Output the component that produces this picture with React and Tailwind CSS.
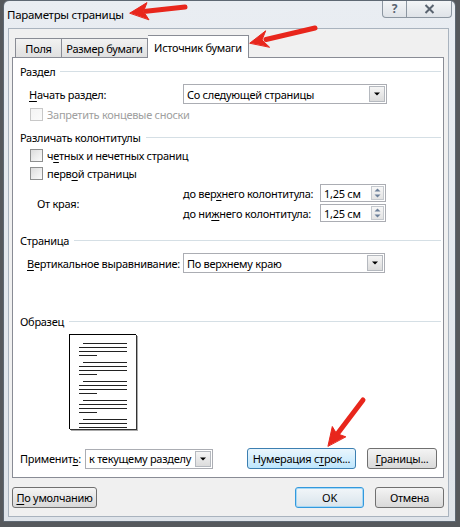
import React from "react";

const font = { fontFamily: '"Noto Sans", "Open Sans", sans-serif', letterSpacing: "-0.28px" };

function Arrow() {
  return (
    <svg width="14" height="14" viewBox="0 0 14 14">
      <path d="M4 5.5 L10 5.5 L7 8.5 Z" fill="#000" />
    </svg>
  );
}

function Select({ text, w }) {
  return (
    <div className={`flex h-[20px] items-center border border-[#abadb3] bg-white ${w}`}>
      <span className="flex-1 pl-[3px] text-[11px] leading-none text-black">{text}</span>
      <div className="mr-[1px] flex h-[16px] w-[16px] items-center justify-center border border-[#b5b9bf] bg-gradient-to-b from-[#f5f5f5] to-[#dcdcdc]">
        <Arrow />
      </div>
    </div>
  );
}

function Spin({ text }) {
  return (
    <div className="flex h-[18px] w-[66px] items-center border border-[#abadb3] bg-white">
      <span className="flex-1 pl-[3px] text-[11px] leading-none">{text}</span>
      <div className="mr-[1px] flex h-[14px] w-[13px] flex-col border border-[#c5c9ce] bg-gradient-to-b from-[#f7f7f7] to-[#e3e3e3]">
        <div className="flex flex-1 items-center justify-center">
          <svg width="7" height="4" viewBox="0 0 7 4"><path d="M0.5 3.5 L3.5 0.5 L6.5 3.5 Z" fill="#6b7f99" /></svg>
        </div>
        <div className="flex flex-1 items-center justify-center">
          <svg width="7" height="4" viewBox="0 0 7 4"><path d="M0.5 0.5 L3.5 3.5 L6.5 0.5 Z" fill="#6b7f99" /></svg>
        </div>
      </div>
    </div>
  );
}

function Header({ children, mt }) {
  return (
    <div className={`flex h-[16px] items-center pl-[7px] pr-[2px] ${mt}`}>
      <span className="text-[11px] leading-none text-black">{children}</span>
      <div className="ml-[5px] h-px flex-1 bg-[#d5dfe5]" />
    </div>
  );
}

function Check({ children, disabled, mt }) {
  return (
    <div className={`flex h-[13px] items-center pl-[17px] ${mt}`}>
      <div
        className={`h-[13px] w-[13px] border bg-gradient-to-br ${
          disabled ? "border-[#c8c8c8] from-[#f4f4f4] to-[#fbfbfb]" : "border-[#8e8f8f] from-[#dcdcdc] to-[#fbfbfb]"
        }`}
      />
      <span className={`ml-[4px] text-[11px] leading-none ${disabled ? "text-[#a0a0a0]" : "text-black"}`}>
        {children}
      </span>
    </div>
  );
}

function Button({ children, w, blue, def }) {
  const cls = blue
    ? "border-[#3c7fb1] from-[#eaf6fd] to-[#bee6fd]"
    : def
    ? "border-[#3399dd] from-[#f2f6f9] to-[#d8e4ec] shadow-[inset_0_0_0_1px_#a6d8f5]"
    : "border-[#707070] from-[#f4f4f4] to-[#d9d9d9]";
  return (
    <div className={`flex h-[21px] items-center justify-center rounded-[3px] border bg-gradient-to-b text-[11px] leading-none text-black ${cls} ${w}`}>
      <span>{children}</span>
    </div>
  );
}

const U = ({ children }) => <span className="underline underline-offset-2">{children}</span>;

function PreviewPage() {
  const groups = [0, 1, 2, 3, 4];
  return (
    <div className="ml-[56px] mt-[5px] flex h-[95px] w-[67px] flex-col gap-[6px] overflow-hidden border-l border-t border-black bg-white px-[9px] pt-[8px] shadow-[1px_1px_0_#333,2px_2px_0_#aaa]">
      {groups.map((g) => (
        <div key={g} className="flex flex-col gap-[3px]">
          <div className="ml-[4px] h-px bg-[#222]" />
          <div className="h-px bg-[#222]" />
          <div className="h-px bg-[#222]" />
          <div className="h-px w-[18px] bg-[#222]" />
        </div>
      ))}
    </div>
  );
}

function Arrows() {
  return (
    <svg className="pointer-events-none absolute left-0 top-0" width="460" height="527" viewBox="0 0 460 527">
      <g fill="#e8261c" stroke="#e8261c" strokeLinecap="round">
        <line x1="185" y1="7" x2="146" y2="11.2" strokeWidth="5" />
        <polygon points="130,13 147,2.6 143.5,11.4 148.8,19.5" strokeWidth="1" strokeLinejoin="round" />
        <line x1="315" y1="28" x2="266" y2="39.5" strokeWidth="5" />
        <polygon points="250,43 265.7,30.8 262,40 269.3,47" strokeWidth="1" strokeLinejoin="round" />
        <line x1="363" y1="400" x2="338" y2="433" strokeWidth="5" />
        <polygon points="328,446 332.3,426.5 336.5,433.5 345.5,436.7" strokeWidth="1" strokeLinejoin="round" />
      </g>
    </svg>
  );
}

export default function App() {
  return (
    <div className="relative h-[527px] w-[460px] overflow-hidden whitespace-nowrap bg-[#56595d]" style={font}>
      <div className="ml-[3px] flex h-[522px] w-[453px] flex-col rounded-t-[6px] border border-[#5e6873] bg-gradient-to-b from-[#e9edf2] to-[#dfe4ea]">
        {/* title bar */}
        <div className="flex h-[27px] items-start justify-between pl-[3px] pr-[3px]">
          <span className="self-center text-[11.5px] leading-none text-black">Параметры страницы</span>
          <div className="flex h-[17px]">
            <div className="flex w-[25px] items-center justify-center rounded-bl-[4px] border border-t-0 border-[#8c96a1] bg-gradient-to-b from-[#f3f5f7] to-[#dfe3e8] text-[12px] font-bold leading-none text-[#5a6470]">
              ?
            </div>
            <div className="flex w-[45px] items-center justify-center rounded-br-[4px] border border-l-0 border-t-0 border-[#8c96a1] bg-gradient-to-b from-[#f3f5f7] to-[#dfe3e8]">
              <svg width="11" height="10" viewBox="0 0 11 10">
                <path d="M1.5 1 L9.5 9 M9.5 1 L1.5 9" stroke="#5a6470" strokeWidth="2" />
              </svg>
            </div>
          </div>
        </div>
        {/* client */}
        <div className="ml-[4px] flex h-[489px] w-[441px] flex-col border border-[#a9b3be] bg-[#f0f0f0]">
          {/* tabs */}
          <div className="ml-[6px] mt-[6px] flex h-[22px] items-end">
            <div className="flex h-[19px] w-[47px] items-center justify-center border border-b-0 border-[#898c95] bg-gradient-to-b from-[#f2f2f2] to-[#e0e0e0] text-[11px] leading-none">
              Поля
            </div>
            <div className="flex h-[19px] w-[86px] items-center justify-center border border-b-0 border-l-0 border-[#898c95] bg-gradient-to-b from-[#f2f2f2] to-[#e0e0e0] text-[11px] leading-none">
              Размер бумаги
            </div>
            <div className="relative z-10 -mb-px flex h-[23px] w-[101px] items-center justify-center border border-b-0 border-l-0 border-[#898c95] bg-white text-[11px] leading-none">
              Источник бумаги
            </div>
          </div>
          {/* panel */}
          <div className="ml-[3px] flex h-[421px] w-[432px] flex-col border border-[#898c95] bg-white">
            <Header mt="mt-[5px]">Раздел</Header>
            <div className="mt-[5px] flex h-[20px] items-center pl-[16px]">
              <span className="w-[154px] text-[11px] leading-none">
                <U>Н</U>ачать раздел:
              </span>
              <Select text="Со следующей страницы" w="w-[204px]" />
            </div>
            <Check disabled mt="mt-[4px]">Запретить концевые сноски</Check>
            <Header mt="mt-[8px]">Различать колонтитулы</Header>
            <Check mt="mt-[4px]">
              ч<U>е</U>тных и нечетных страниц
            </Check>
            <Check mt="mt-[5px]">
              перв<U>о</U>й страницы
            </Check>
            <div className="mt-[4px] flex h-[38px] items-center pl-[24px]">
              <span className="w-[146px] text-[11px] leading-none">От края:</span>
              <div className="flex flex-col gap-[2px]">
                <div className="flex h-[18px] items-center">
                  <span className="w-[137px] text-[11px] leading-none">
                    до вер<U>х</U>него колонтитула:
                  </span>
                  <Spin text="1,25 см" />
                </div>
                <div className="flex h-[18px] items-center">
                  <span className="w-[137px] text-[11px] leading-none">
                    до ни<U>ж</U>него колонтитула:
                  </span>
                  <Spin text="1,25 см" />
                </div>
              </div>
            </div>
            <Header mt="mt-[10px]">Страница</Header>
            <div className="mt-[5px] flex h-[20px] items-center pl-[14px]">
              <span className="w-[156px] text-[11px] leading-none">
                <U>В</U>ертикальное выравнивание:
              </span>
              <Select text="По верхнему краю" w="w-[202px]" />
            </div>
            <Header mt="mt-[40px]">Образец</Header>
            <PreviewPage />
            <div className="mb-[8px] mt-auto flex h-[21px] items-center pl-[7px]">
              <span className="w-[65px] text-[11px] leading-none">
                Применит<U>ь</U>:
              </span>
              <Select text="к текущему разделу" w="w-[128px]" />
              <div className="ml-[34px]">
                <Button w="w-[109px]" blue>
                  Нумерация с<U>т</U>рок...
                </Button>
              </div>
              <div className="ml-[11px]">
                <Button w="w-[70px]">
                  <U>Г</U>раницы...
                </Button>
              </div>
            </div>
          </div>
          {/* bottom buttons */}
          <div className="mt-[9px] flex h-[21px] items-center pl-[3px] pr-[4px]">
            <Button w="w-[85px]">
              <U>П</U>о умолчанию
            </Button>
            <div className="flex-1" />
            <Button w="w-[69px]" def>
              OK
            </Button>
            <div className="ml-[11px]">
              <Button w="w-[69px]">Отмена</Button>
            </div>
          </div>
        </div>
      </div>
      <Arrows />
    </div>
  );
}
